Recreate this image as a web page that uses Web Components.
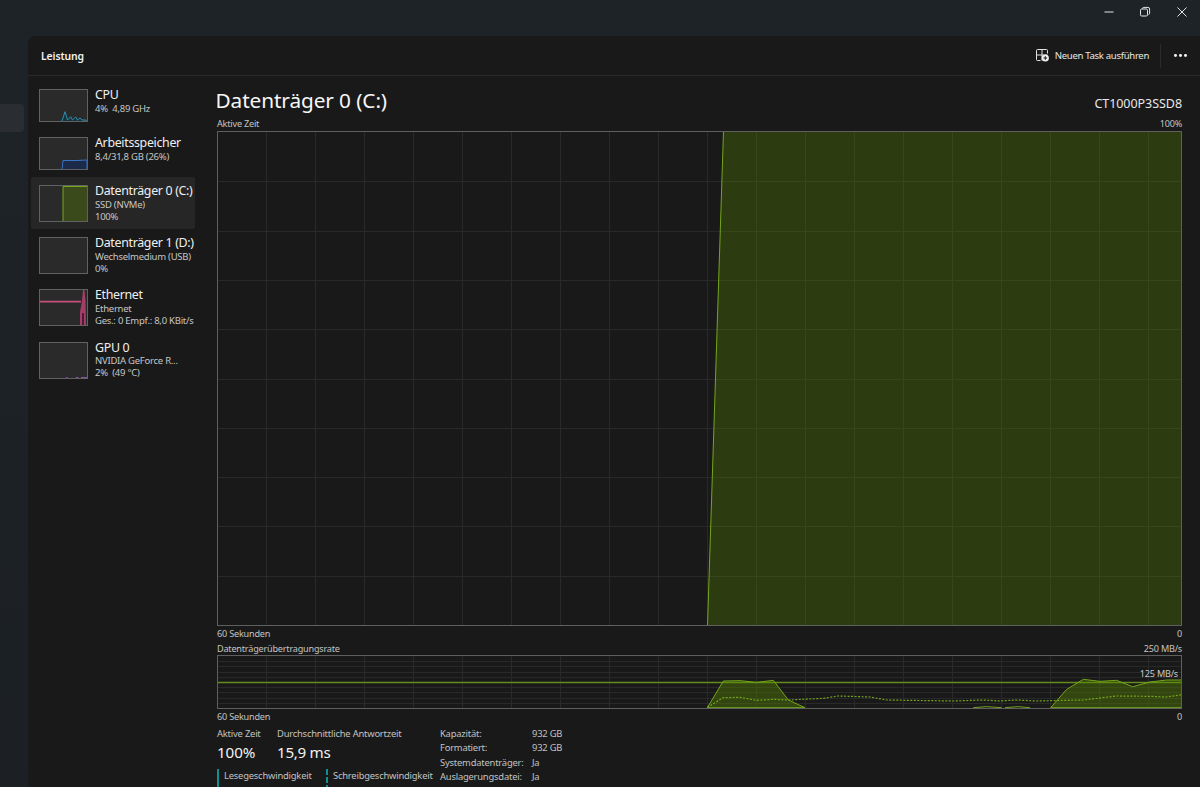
<!DOCTYPE html>
<html lang="de"><head><meta charset="utf-8"><title>Leistung</title>
<style>
html,body{margin:0;height:787px;overflow:hidden;background:#1d2227}
body{font-family:"Noto Sans","Open Sans",sans-serif;color:#fff}
</style></head><body>
<tm-app>
  <tm-titlebar slot="top"></tm-titlebar>
  <tm-nav slot="nav"></tm-nav>
  <tm-header slot="head">Leistung</tm-header>
  <div slot="side">
    <tm-item name="CPU" h="48"><span slot="sub">4%&nbsp; 4,89 GHz</span>
      <tm-thumb slot="thumb" kind="cpu" h="32"></tm-thumb></tm-item>
    <tm-item name="Arbeitsspeicher" h="48"><span slot="sub">8,4/31,8 GB (26%)</span>
      <tm-thumb slot="thumb" kind="mem" h="32"></tm-thumb></tm-item>
    <tm-item name="Datenträger 0 (C:)" h="52" selected><span slot="sub">SSD (NVMe)<br>100%</span>
      <tm-thumb slot="thumb" kind="disk" h="36"></tm-thumb></tm-item>
    <tm-item name="Datenträger 1 (D:)" h="52"><span slot="sub">Wechselmedium (USB)<br>0%</span>
      <tm-thumb slot="thumb" kind="none" h="36"></tm-thumb></tm-item>
    <tm-item name="Ethernet" h="52.5"><span slot="sub">Ethernet<br>Ges.: 0 Empf.: 8,0 KBit/s</span>
      <tm-thumb slot="thumb" kind="eth" h="36"></tm-thumb></tm-item>
    <tm-item name="GPU 0" h="52"><span slot="sub">NVIDIA GeForce R...<br>2%&nbsp; (49 °C)</span>
      <tm-thumb slot="thumb" kind="gpu" h="36"></tm-thumb></tm-item>
  </div>
  <tm-detail slot="main">
    <tm-heading title-text="Datenträger 0 (C:)" model="CT1000P3SSD8"></tm-heading>
    <tm-caption h="15" left="Aktive Zeit" right="100%"></tm-caption>
    <tm-active-graph></tm-active-graph>
    <tm-caption h="15" left="60 Sekunden" right="0"></tm-caption>
    <tm-caption h="14" left="Datenträgerübertragungsrate" right="250 MB/s"></tm-caption>
    <tm-rate-graph></tm-rate-graph>
    <tm-caption h="15" left="60 Sekunden" right="0"></tm-caption>
    <tm-stats></tm-stats>
  </tm-detail>
</tm-app>
<script>
function def(name, css, html, init){
  customElements.define(name, class extends HTMLElement{
    connectedCallback(){
      if(this.shadowRoot) return;
      const r=this.attachShadow({mode:'open'});
      r.innerHTML='<style>'+css+'</style>'+(typeof html==='function'?html(this):html);
      if(init) init(this,r);
    }
  });
}
def('tm-app',`
  :host{display:grid;width:1200px;height:787px;grid-template-columns:28px 1fr;grid-template-rows:36px 1fr;overflow:hidden;
    background:linear-gradient(180deg,#1e2328,#1c2024)}
  .top{grid-column:1/3}
  .panel{background:#191919;border-top-left-radius:8px;display:grid;grid-template-rows:40px 1fr;grid-template-columns:172px 1fr;min-height:0;overflow:hidden}
  .h{grid-column:1/3}
  .s{padding:5px 5px 0 3px}
  .m{min-width:0;min-height:0;overflow:hidden}
`,`<div class="top"><slot name="top"></slot></div><div><slot name="nav"></slot></div>
<div class="panel"><div class="h"><slot name="head"></slot></div><div class="s"><slot name="side"></slot></div><div class="m"><slot name="main"></slot></div></div>`);

def('tm-titlebar',`
  :host{display:flex;justify-content:flex-end;align-items:center;height:36px;padding-bottom:12px;box-sizing:border-box;padding-top:0}
  .b{width:36.5px;height:24px;display:flex;align-items:center;justify-content:center}
  svg{width:12px;height:12px;fill:none;stroke:#e4e4e4;stroke-width:1}
`,`<div class="b"><svg viewBox="0 0 12 12"><path d="M1.5 6h9"/></svg></div>
<div class="b"><svg viewBox="0 0 12 12"><rect x="1.5" y="3" width="7" height="7" rx="1.2"/><path d="M3.5 2.8V2.4a1.2 1.2 0 0 1 1.2-1H9a1.6 1.6 0 0 1 1.6 1.6v4.3a1.2 1.2 0 0 1-1.1 1.2"/></svg></div>
<div class="b"><svg viewBox="0 0 12 12"><path d="M1.5 1.5l9 9M10.5 1.5l-9 9"/></svg></div>`);

def('tm-nav',`
  :host{display:block;padding-top:68px}
  .sel{width:24px;height:28px;background:#2a2e32;border-radius:0 4px 4px 0}
`,`<div class="sel"></div>`);

def('tm-header',`
  :host{display:flex;align-items:center;height:40px;box-sizing:border-box;border-bottom:1px solid #2a2a2a;padding:0 0 0 13px;font-size:10.4px;font-weight:600;color:#f2f2f2;letter-spacing:-.1px}
  .t{flex:1}
  .run{display:flex;align-items:center;gap:6px;font-weight:400;font-size:9.6px;color:#e6e6e6;letter-spacing:-.33px;margin-right:11px}
  .run svg{width:13px;height:13px;display:block}
  .sep{width:1px;height:24px;background:#2b2b2b}
  .more{width:39px;display:flex;justify-content:center;gap:2.4px}
  .more i{width:2.8px;height:2.8px;border-radius:50%;background:#eee;display:block}
`,`<div class="t"><slot></slot></div>
<div class="run"><svg viewBox="0 0 13 13" fill="none" stroke="#e4e4e4" stroke-width="1"><path d="M4.5 11.5H1.5a1 1 0 0 1-1-1V1.5a1 1 0 0 1 1-1h9a1 1 0 0 1 1 1v3M6 .5v11M.5 6h11"/><circle cx="9.3" cy="9" r="3.6" fill="#eee" stroke="none"/><path d="M9.3 7.2v3.6M7.5 9h3.6" stroke="#191919"/></svg><span>Neuen Task ausführen</span></div>
<div class="sep"></div><div class="more"><i></i><i></i><i></i></div>`);

def('tm-item',`
  :host{display:flex;box-sizing:border-box;width:164px;padding:8px 0 0 8px;gap:7px;border-radius:2px;white-space:nowrap}
  :host([selected]){background:#262626}
  .n{font-size:12.4px;line-height:13px;color:#f0f0f0;margin-top:-1px;letter-spacing:-.32px}
  .s{font-size:9.5px;line-height:12px;color:#c6c6c6;margin-top:1.5px;letter-spacing:-.25px}
`,h=>`<slot name="thumb"></slot><div><div class="n">${h.getAttribute('name')}</div><div class="s"><slot name="sub"></slot></div></div>`,
h=>{h.style.height=h.getAttribute('h')+'px'});

const THUMBS={
 cpu:`<path d="M23 31L26 21.7 28.5 30 31.7 26.7 33.5 30 36.7 27 38.5 30 41 28 43 30 47 30V32H23Z" fill="#17323c" stroke="#2e8fae"/>`,
 mem:`<path d="M23 33L24 22.5H38L48 22V33Z" fill="#1a2a48" stroke="#3a72c4"/>`,
 disk:`<path d="M24 37V.5H49V37Z" fill="#3a4a1a" stroke="#76a51f"/>`,
 none:'',
 eth:`<path d="M0 11.7H42" stroke="#c4507c" stroke-width="1.8" fill="none"/><path d="M41 36V22L43 11 44 0H45.5L46.5 11 47 36Z" fill="#b33f70" opacity=".9"/><path d="M43 36V23H45V36Z" fill="#4a1f35"/>`,
 gpu:`<path d="M27 34.5h1.5M37 34.5h2.5M42 34.5h6" stroke="#8b4fa8" stroke-width="1" fill="none"/>`
};
def('tm-thumb',`
  :host{display:block;width:49px;flex:none;box-sizing:border-box;border:1px solid #616161;background:#2a2a2a;overflow:hidden}
  svg{display:block;width:47px;height:100%}
`,h=>{const H=+h.getAttribute('h');return `<svg viewBox="1 0 47 ${H-1}" preserveAspectRatio="none">${THUMBS[h.getAttribute('kind')]}</svg>`},
h=>{h.style.height=(+h.getAttribute('h')+1)+'px'});

def('tm-detail',`:host{display:flex;flex-direction:column;padding:0 18px 0 17px;height:711px;box-sizing:border-box}`,`<slot></slot>`);

def('tm-heading',`
  :host{display:flex;justify-content:space-between;align-items:center;height:40px;flex:none}
  .t{font-size:20.8px;margin-left:-1.5px;color:#f6f6f6;letter-spacing:-.1px;margin-top:8px;line-height:26px;font-weight:400}
  .m{font-size:12.5px;color:#e8e8e8;margin-top:15px;letter-spacing:-.05px}
`,h=>`<div class="t">${h.getAttribute('title-text')}</div><div class="m">${h.getAttribute('model')}</div>`);

def('tm-caption',`
  :host{display:flex;justify-content:space-between;align-items:center;flex:none;font-size:9.1px;color:#c4c4c4;letter-spacing:-.2px}
`,h=>`<span>${h.getAttribute('left')}</span><span>${h.getAttribute('right')}</span>`,
h=>{h.style.height=h.getAttribute('h')+'px'});

function lines(W,H,rows,cols0,step,c){
  let s='';
  for(let i=1;i<rows;i++){const y=Math.round(i*H/rows)+.5;s+=`<path d="M0 ${y}H${W}" stroke="${c}"/>`}
  for(let x=cols0;x<W;x+=step){s+=`<path d="M${Math.round(x)+.5} 0V${H}" stroke="${c}"/>`}
  return s;
}
def('tm-active-graph',`
  :host{display:block;flex:none;width:965px;height:495px;box-sizing:border-box;border:1px solid #5f5f5f;overflow:hidden}
  svg{display:block;width:100%;height:100%}
`,`<svg viewBox="0 0 963 493" preserveAspectRatio="none">${lines(963,493,10,47.5,49.05,'#292929')}
<path d="M489.5 493.5L505.5 -1H964V494Z" fill="#5a8a00" fill-opacity=".32"/>
<path d="M489.5 493.5L505.5 -1" stroke="#74a51c" fill="none"/></svg>`);

const p=a=>a.map(q=>((q[0]-218)+','+(q[1]-656))).join(' ');
const zz=(x,y)=>[690+x/3,620+y/3];
const f1=[[52,263],[100,183],[150,182],[200,187],[250,181],[295,240],[345,263]].map(q=>zz(q[0],q[1]));
const f2=[[1082,263],[1130,208],[1180,178],[1230,184],[1280,181],[1328,200],[1380,186],[1430,180],[1476,180],[1476,263]].map(q=>zz(q[0],q[1]));
const b1=[[850,263],[890,260],[935,263]].map(q=>zz(q[0],q[1]));
const b2=[[945,263],[985,260],[1020,263]].map(q=>zz(q[0],q[1]));
const dash=[[52,262],[100,233],[150,232],[200,241],[250,238],[295,240],[400,235],[445,228],[540,231],[590,240],[790,243],[880,240],[930,243],[980,240],[1040,243],[1180,240],[1280,228],[1380,229],[1430,231],[1476,224]].map(q=>zz(q[0],q[1]));
def('tm-rate-graph',`
  :host{display:block;position:relative;flex:none;width:965px;height:54px;box-sizing:border-box;border:1px solid #5f5f5f;overflow:hidden}
  svg{display:block;width:100%;height:100%}
  .l{position:absolute;right:3px;top:12px;font-size:9.1px;line-height:12px;color:#c8c8c8;letter-spacing:-.2px}
`,`<svg viewBox="0 0 963 52" preserveAspectRatio="none">${lines(963,52,10,47.5,49.05,'#292929')}
<path d="M0 26.5H963" stroke="#638c1c" stroke-width="1.6"/>
<polygon points="${p(f1)}" fill="#5a8a00" fill-opacity=".4" stroke="#74a51c"/>
<polygon points="${p(f2)}" fill="#5a8a00" fill-opacity=".4" stroke="#74a51c"/>
<polyline points="${p(b1)}" fill="none" stroke="#74a51c"/><polyline points="${p(b2)}" fill="none" stroke="#74a51c"/>
<polyline points="${p(dash)}" fill="none" stroke="#74a51c" stroke-width="1.2" stroke-dasharray="2 1.5"/>
</svg><div class="l">125 MB/s</div>`);

def('tm-stats',`
  :host{display:grid;grid-template-columns:223px 1fr;flex:none;margin-top:3px;font-size:9.4px;color:#c2c2c2;letter-spacing:-.2px;white-space:nowrap}
  .top{display:flex}
  .top>div:first-child{width:60px}
  .v{font-size:15.2px;color:#f2f2f2;line-height:22px;letter-spacing:-.1px}
  .v.m{letter-spacing:-.3px}
  .c{line-height:14px}
  .sp{display:flex;margin-top:6px;height:30px}
  .sp div{padding-left:5px;line-height:14px;box-sizing:border-box;width:109px;height:30px;border-left:2px solid #148f8f}
  .sp div+div{border-left:2px dashed #148f8f;width:auto}
  .kv{display:grid;grid-template-columns:92px auto;justify-content:start;grid-auto-rows:14.4px;line-height:14.4px}
`,`<div><div class="top"><div><div class="c">Aktive Zeit</div><div class="v">100%</div></div><div><div class="c">Durchschnittliche Antwortzeit</div><div class="v m">15,9 ms</div></div></div>
<div class="sp"><div>Lesegeschwindigkeit</div><div>Schreibgeschwindigkeit</div></div></div>
<div class="kv"><span>Kapazität:</span><span>932 GB</span><span>Formatiert:</span><span>932 GB</span><span>Systemdatenträger:</span><span>Ja</span><span>Auslagerungsdatei:</span><span>Ja</span></div>`);
</script>
</body></html>
